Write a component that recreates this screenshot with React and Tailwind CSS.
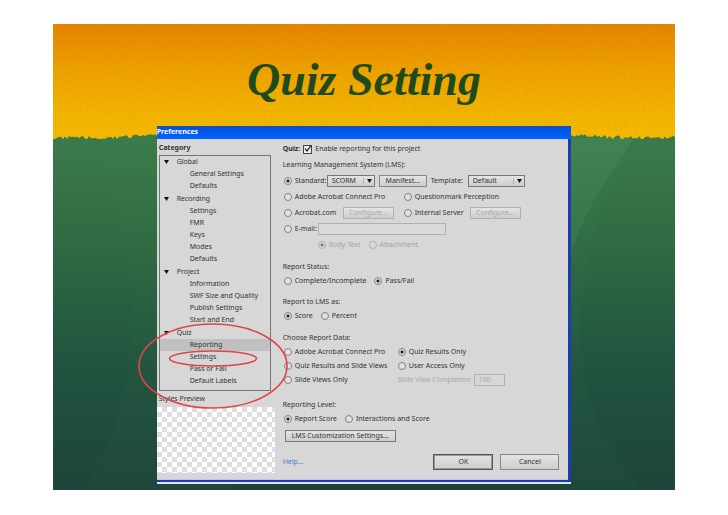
import { useState } from 'react';

const CATEGORIES = [
    { name: 'Global', items: ['General Settings', 'Defaults'] },
    { name: 'Recording', items: ['Settings', 'FMR', 'Keys', 'Modes', 'Defaults'] },
    { name: 'Project', items: ['Information', 'SWF Size and Quality', 'Publish Settings', 'Start and End'] },
    { name: 'Quiz', items: ['Reporting', 'Settings', 'Pass or Fail', 'Default Labels'] }
];

// Ragged brush edge between the orange header and the green body
const tornEdge = () => {
    let d = 'M0 466 V113';
    for (let x = 0; x <= 622; x += 2) {
        const wave = Math.sin(x * 0.045);
        const rough = (Math.abs(Math.sin(x * 12.9898) * 43758.5453) % 1) * 4;
        d += ` L${x} ${(115 + wave - rough).toFixed(1)}`;
    }
    return `${d} V466 Z`;
};

const Backdrop = () => (
    <svg
        className="absolute inset-0 h-full w-full"
        viewBox="0 0 622 466"
        preserveAspectRatio="none"
        aria-hidden="true"
    >
        <defs>
            <linearGradient id="sun" x1="0" y1="0" x2="0" y2="1">
                <stop offset="0" stopColor="#e68400" />
                <stop offset="0.35" stopColor="#ee9f00" />
                <stop offset="0.7" stopColor="#f3b300" />
                <stop offset="1" stopColor="#f5bc00" />
            </linearGradient>
            <linearGradient id="grass" x1="0" y1="0" x2="0" y2="1">
                <stop offset="0" stopColor="#3b7b4b" />
                <stop offset="0.3" stopColor="#2f6b43" />
                <stop offset="0.65" stopColor="#21543f" />
                <stop offset="1" stopColor="#1d453b" />
            </linearGradient>
            <filter id="canvas" x="0" y="0" width="100%" height="100%">
                <feTurbulence type="fractalNoise" baseFrequency="0.45" numOctaves="2" seed="4" />
                <feColorMatrix values="0 0 0 0 0.4  0 0 0 0 0.2  0 0 0 0 0  0.9 0 0 0 -0.35" />
            </filter>
        </defs>
        <rect width="622" height="120" fill="url(#sun)" />
        <rect width="622" height="120" filter="url(#canvas)" opacity="0.35" />
        <path d={tornEdge()} fill="url(#grass)" />
        <path d="M30 114 C70 170 82 240 80 300 C76 370 60 420 30 466 H180 V114 Z" fill="#5fae6a" opacity="0.03" />
        <path d="M581 114 C545 165 522 205 514 250 V114 Z" fill="#6fc08a" opacity="0.1" />
        <path d="M581 114 C535 190 520 280 532 350 C540 400 560 440 590 466 H510 V114 Z" fill="#6fc08a" opacity="0.03" />
    </svg>
);

const Radio = ({ name, label, checked = false, disabled = false, className = '' }) => (
    <label className={`flex items-center gap-[3px] whitespace-nowrap ${disabled ? 'text-[#a4a4a4]' : ''} ${className}`}>
        <input
            type="radio"
            name={name}
            defaultChecked={checked}
            disabled={disabled}
            className="size-2 shrink-0 appearance-none rounded-full border border-[#808080] bg-[#e2e2e2] checked:bg-[radial-gradient(circle,#222_0_1px,#e2e2e2_2px)] disabled:opacity-50"
        />
        <span>{label}</span>
    </label>
);

const Button = ({ children, className = '', ...props }) => (
    <button
        type="button"
        className={`flex items-center justify-center border bg-linear-to-b from-[#e4e4e4] to-[#cdcdcd] ${className}`}
        {...props}
    >
        {children}
    </button>
);

const Select = ({ name, options, className = '' }) => (
    <span className={`relative h-3 ${className}`}>
        <select
            id={name}
            aria-label={name}
            className="block h-full w-full appearance-none border border-[#777] bg-linear-to-b from-[#e4e4e4] to-[#cdcdcd] pb-px pl-1 leading-none"
        >
            {options.map((option) => (
                <option key={option}>{option}</option>
            ))}
        </select>
        <span className="pointer-events-none absolute inset-y-[3px] right-0 flex w-3 items-center justify-center border-l border-[#b5b5b5]">
            <svg className="h-1 w-[5px]" viewBox="0 0 5 4">
                <path d="M0 0 H5 L2.5 4 Z" fill="#111" />
            </svg>
        </span>
    </span>
);

const CategoryTree = () => {
    const [selected, setSelected] = useState('Quiz/Reporting');

    return (
        <ul className="flex flex-col gap-px border border-[#777] pb-[3px]">
            {CATEGORIES.map((category) => (
                <li key={category.name} className="relative">
                    <div className="flex h-3 items-center">
                        <svg className="ml-1 h-1 w-[5px]" viewBox="0 0 5 4">
                            <path d="M0 0 H5 L2.5 4 Z" fill="#111" />
                        </svg>
                        <span className="ml-2">{category.name}</span>
                    </div>
                    <ul>
                        {category.items.map((item) => {
                            const id = `${category.name}/${item}`;
                            return (
                                <li key={id} className={`h-3 ${selected === id ? 'bg-[#c0c0c0]' : ''}`}>
                                    <button
                                        type="button"
                                        onClick={() => setSelected(id)}
                                        className="block h-3 w-full pl-[30px] text-left"
                                    >
                                        {item}
                                    </button>
                                </li>
                            );
                        })}
                    </ul>
                    {/* Hand drawn circles around the quiz settings entry */}
                    {category.name === 'Quiz' && (
                        <svg
                            className="pointer-events-none absolute -top-1 -left-[22px] z-10 h-[86px] w-[150px]"
                            viewBox="0 0 150 86"
                            fill="none"
                            stroke="#df454b"
                            strokeWidth="1.6"
                        >
                            <ellipse cx="75" cy="43" rx="74" ry="42" />
                            <ellipse cx="75" cy="35.5" rx="43.5" ry="7.5" />
                        </svg>
                    )}
                </li>
            ))}
        </ul>
    );
};

const Sidebar = () => (
    <aside className="flex w-[118px] shrink-0 flex-col">
        <div className="flex flex-col pr-1 pl-0.5">
            <h2 className="h-3.5 leading-3.5 font-bold">Category</h2>
            <CategoryTree />
            <h3 className="h-4 leading-4">Styles Preview</h3>
        </div>
        <div className="h-[66px] bg-[repeating-conic-gradient(#dedede_0_25%,#fff_0_50%)] bg-size-[10px_10px]" />
    </aside>
);

const ReportingForm = () => (
    <form className="flex min-w-0 flex-1 flex-col pl-2">
        <label className="flex h-4 items-center">
            <span className="font-bold">Quiz:</span>
            <input type="checkbox" defaultChecked className="peer ml-[3px] size-[9px] appearance-none border border-[#444] bg-[#eee]" />
            <svg className="pointer-events-none -ml-2 hidden size-2 peer-checked:block" viewBox="0 0 8 8">
                <path d="M1 3.5 L3 6 L7 0.5" fill="none" stroke="#111" strokeWidth="1.2" />
            </svg>
            <span className="ml-[3px]">Enable reporting for this project</span>
        </label>

        <fieldset>
            <legend className="h-4 leading-4">Learning Management System (LMS):</legend>
            <div className="flex h-4 items-center pl-px">
                <Radio name="lms" label="Standard:" checked className="w-[43px]" />
                <Select name="standard" options={['SCORM', 'AICC']} className="w-12" />
                <Button className="ml-1 h-3 w-12 border-[#888]">Manifest...</Button>
                <label htmlFor="template" className="ml-1 w-[37px]">Template:</label>
                <Select name="template" options={['Default', 'Custom']} className="w-[57px]" />
            </div>
            <div className="flex h-4 items-center pl-px">
                <Radio name="lms" label="Adobe Acrobat Connect Pro" className="w-[120px]" />
                <Radio name="lms" label="Questionmark Perception" />
            </div>
            <div className="flex h-4 items-center pl-px">
                <Radio name="lms" label="Acrobat.com" className="w-[59px]" />
                <Button disabled className="h-3 w-[51px] border-[#b0b0b0] text-[#a8a8a8]">Configure...</Button>
                <Radio name="lms" label="Internal Server" className="ml-2.5 w-[66px]" />
                <Button disabled className="h-3 w-[51px] border-[#b0b0b0] text-[#a8a8a8]">Configure...</Button>
            </div>
            <div className="flex h-4 items-center pl-px">
                <Radio name="lms" label="E-mail:" className="w-[34px]" />
                <input type="email" aria-label="E-mail" className="h-3 w-32 border border-[#b0b0b0] bg-[#dadada]" />
            </div>
            <div className="flex h-4 items-center gap-2 pl-[35px]">
                <Radio name="mailBody" label="Body Text" checked disabled />
                <Radio name="mailBody" label="Attachment" disabled />
            </div>
        </fieldset>

        <fieldset className="mt-[7px]">
            <legend className="h-3.5 leading-3.5">Report Status:</legend>
            <div className="flex h-3.5 items-center gap-2 pl-px">
                <Radio name="status" label="Complete/Incomplete" />
                <Radio name="status" label="Pass/Fail" checked />
            </div>
        </fieldset>

        <fieldset className="mt-[7px]">
            <legend className="h-3.5 leading-3.5">Report to LMS as:</legend>
            <div className="flex h-3.5 items-center gap-2 pl-px">
                <Radio name="reportAs" label="Score" checked />
                <Radio name="reportAs" label="Percent" />
            </div>
        </fieldset>

        <fieldset className="mt-2">
            <legend className="h-3.5 leading-3.5">Choose Report Data:</legend>
            <div className="grid auto-rows-[14px] grid-cols-[114px_1fr] items-center pl-px">
                <Radio name="data" label="Adobe Acrobat Connect Pro" />
                <Radio name="data" label="Quiz Results Only" checked />
                <Radio name="data" label="Quiz Results and Slide Views" />
                <Radio name="data" label="User Access Only" />
                <Radio name="data" label="Slide Views Only" />
                <label className="flex items-center gap-[3px] text-[#a8a8a8]">
                    Slide View Completion
                    <input disabled defaultValue="100" className="h-3 w-[31px] border border-[#b0b0b0] pl-1" />
                </label>
            </div>
        </fieldset>

        <fieldset className="mt-[11px]">
            <legend className="h-3.5 leading-3.5">Reporting Level:</legend>
            <div className="flex h-3.5 items-center gap-2 pl-px">
                <Radio name="level" label="Report Score" checked />
                <Radio name="level" label="Interactions and Score" />
            </div>
        </fieldset>

        <Button className="mt-1 ml-0.5 h-3 w-[111px] border-[#777]">LMS Customization Settings...</Button>

        <div className="mt-3 flex h-4 items-center justify-end gap-[7px] pr-[9px]">
            <a href="#help" className="mr-auto text-[#3a86c8]">Help...</a>
            <Button className="h-4 w-[60px] border-[#555] ring-1 ring-[#999] ring-inset">OK</Button>
            <Button className="h-4 w-[59px] border-[#888]">Cancel</Button>
        </div>
    </form>
);

const PreferencesDialog = () => (
    <section className="relative mx-auto w-2/3 border-b-2 border-[#dfe6f5] font-['Noto_Sans',sans-serif] text-[7px] leading-3 text-[#333]">
        <header className="h-[13px] bg-linear-to-b from-[#0a4fd0] via-[#0058ee] to-[#0066ff]">
            <h2 className="text-[7px] leading-3 font-bold text-white">Preferences</h2>
        </header>
        <div className="flex border-r-3 border-b-2 border-[#1c3cb0] bg-[#d7d7d7] pt-0.5 pb-[7px] inset-shadow-[0_-1px_0_#b9c6ee]">
            <Sidebar />
            <ReportingForm />
        </div>
    </section>
);

export default function App() {
    return (
        <div className="min-h-screen bg-white px-[53px] py-6">
            <main className="relative overflow-hidden pb-[6px]">
                <Backdrop />
                <h1 className="relative h-[102px] pt-[26px] text-center font-['Palatino_Linotype','Palatino','Liberation_Serif',serif] text-[46px] leading-[60px] font-bold text-[#1f4a1e] italic">
                    Quiz Setting
                </h1>
                <PreferencesDialog />
            </main>
        </div>
    );
}
